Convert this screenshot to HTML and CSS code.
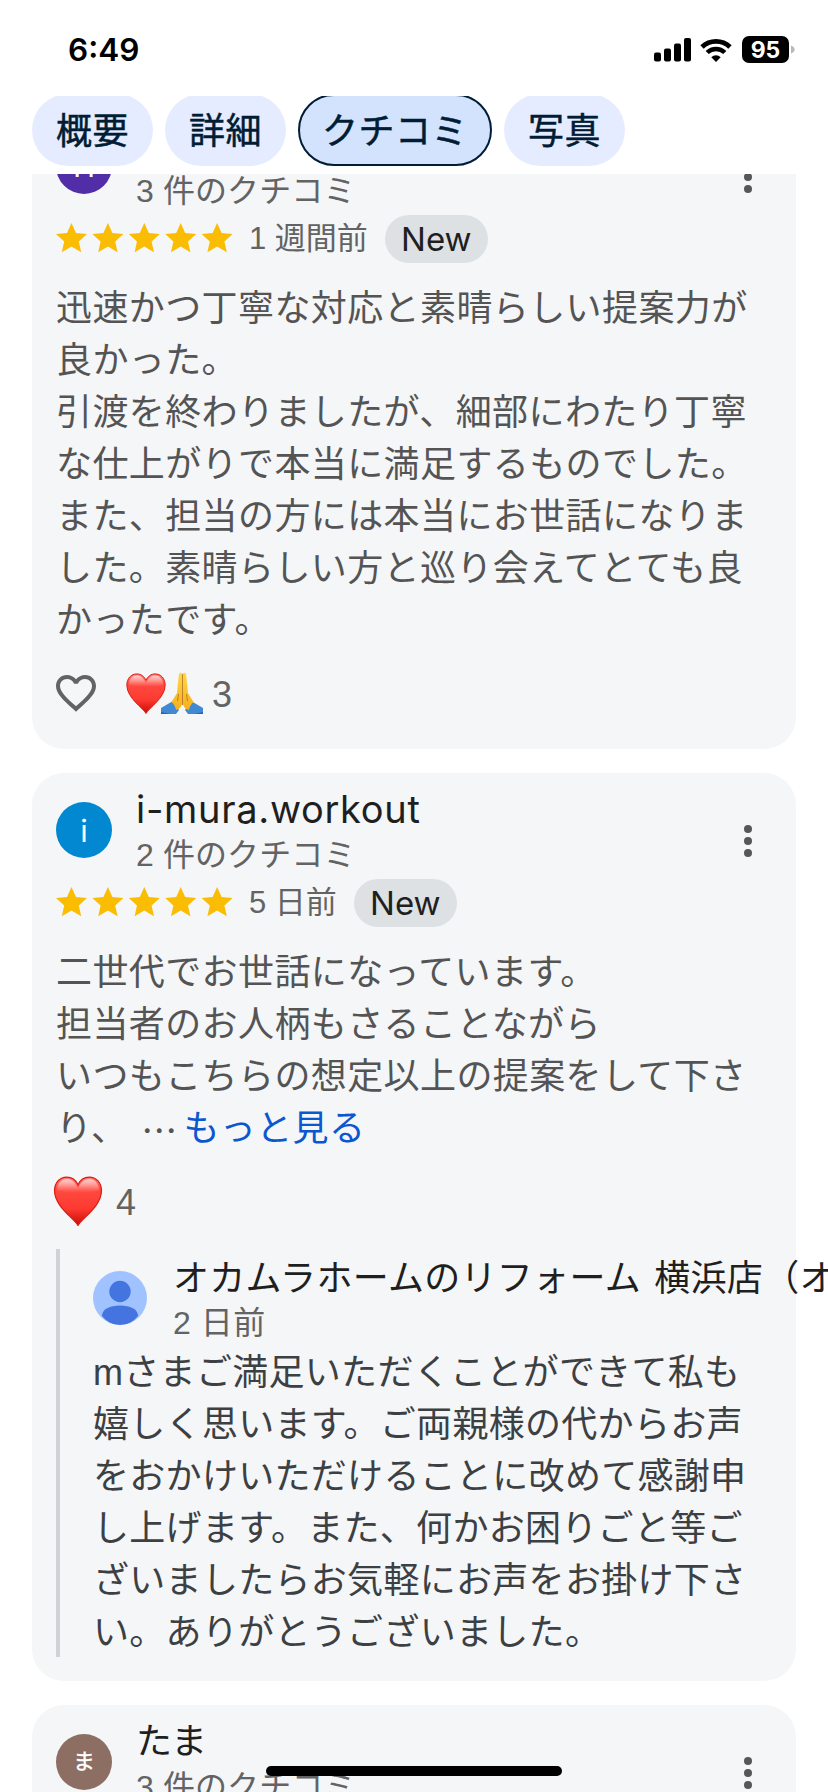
FILE: index.html
```html
<!DOCTYPE html>
<html lang="ja">
<head>
<meta charset="utf-8">
<title>クチコミ</title>
<link rel="stylesheet" href="styles.css">
</head>
<body>
<svg class="defs" aria-hidden="true">
  <defs>
    <linearGradient id="heartFill" x1="0" y1="0" x2="0" y2="1">
      <stop offset="0" stop-color="#ff8078"/><stop offset=".25" stop-color="#ff4a40"/><stop offset=".65" stop-color="#fd3a30"/><stop offset="1" stop-color="#c80d08"/>
    </linearGradient>
    <linearGradient id="heartShine" x1="0" y1="0" x2="0" y2="1">
      <stop offset="0" stop-color="#fff" stop-opacity=".65"/><stop offset="1" stop-color="#fff" stop-opacity="0"/>
    </linearGradient>
    <linearGradient id="hand" x1="0" y1="0" x2="0" y2="1">
      <stop offset="0" stop-color="#ffd748"/><stop offset="1" stop-color="#f5b01d"/>
    </linearGradient>
    <symbol id="heart" viewBox="0 0 48 49">
      <path d="M24 48.500C21 42 1 30 1 14.500C1 6 6.500 1 13 1C18 1 22 4 24 8.500C26 4 30 1 35 1C41.500 1 47 6 47 14.500C47 30 27 42 24 48.500Z" fill="url(#heartFill)" stroke="#dc1c12" stroke-width="1.200"/>
      <path d="M3.500 14C3.500 7 8 3 13 3C18 3 21 6 24 12C27 6 30 3 35 3C40 3 44.500 7 44.500 14C38 17 10 17 3.500 14Z" fill="url(#heartShine)"/>
    </symbol>
    <symbol id="stars" viewBox="0 0 177 30">
      <g fill="#fbbc04">
        <path id="star" d="M15.500 0L20 10.100L31 11.100L22.800 18.500L25.200 29.300L15.500 23.600L5.800 29.300L8.200 18.500L0 11.100L11 10.100Z"/>
        <use href="#star" x="36.400"/><use href="#star" x="72.800"/><use href="#star" x="109.200"/><use href="#star" x="145.600"/>
      </g>
    </symbol>
    <symbol id="dots" viewBox="0 0 8 32"><g fill="#575757"><circle cx="4" cy="4" r="4"/><circle cx="4" cy="16" r="4"/><circle cx="4" cy="28" r="4"/></g></symbol>
  </defs>
</svg>
<div class="screen">
  <header class="status">
    <span class="time">6:49</span>
    <div class="indicators">
      <svg class="signal" viewBox="0 0 38 24"><rect x="0" y="14.500" width="7" height="9" rx="2"/><rect x="10" y="10.500" width="7" height="13" rx="2"/><rect x="20" y="5.500" width="7" height="18" rx="2"/><rect x="30" y="0" width="7" height="23.500" rx="2"/></svg>
      <svg class="wifi" viewBox="0 0 32 24"><path d="M2 9A20 20 0 0 1 30 9" fill="none" stroke="#000" stroke-width="4.700"/><path d="M7.200 14.500A12.500 12.500 0 0 1 24.800 14.500" fill="none" stroke="#000" stroke-width="4.500"/><path d="M16 24L11.300 19.300A6.700 6.700 0 0 1 20.700 19.300Z"/></svg>
      <div class="battery"><span>95</span></div>
      <svg class="cap" viewBox="0 0 5 10"><path d="M0 0C6 2 6 8 0 10Z" fill="#b9b9b9"/></svg>
    </div>
  </header>
  <nav class="tabs">
    <span class="tab">概要</span><span class="tab">詳細</span><span class="tab active">クチコミ</span><span class="tab">写真</span>
  </nav>
  <main class="reviews">
    <article class="card first">
      <div class="author">
        <div class="avatar purple">H</div>
        <div class="who"><div class="name"></div><div class="count">3 件のクチコミ</div></div>
        <svg class="more"><use href="#dots"/></svg>
      </div>
      <div class="rating"><svg class="stars"><use href="#stars"/></svg><span class="date">1 週間前</span><span class="badge">New</span></div>
      <p class="text">迅速かつ丁寧な対応と素晴らしい提案力が<br>良かった。<br>引渡を終わりましたが、細部にわたり丁寧<br>な仕上がりで本当に満足するものでした。<br>また、担当の方には本当にお世話になりま<br>した。素晴らしい方と巡り会えてとても良<br>かったです。</p>
      <div class="reactions">
        <svg class="like" viewBox="0 0 24 24"><path fill="#636363" d="M16.500 3c-1.740 0-3.410.81-4.500 2.090C10.910 3.810 9.240 3 7.500 3 4.420 3 2 5.420 2 8.500c0 3.780 3.400 6.860 8.550 11.540L12 21.350l1.450-1.320C18.600 15.360 22 12.280 22 8.500 22 5.420 19.580 3 16.500 3zm-4.400 15.550l-.1.100-.1-.1C7.140 14.240 4 11.390 4 8.500 4 6.500 5.500 5 7.500 5c1.540 0 3.040.99 3.570 2.360h1.870C13.460 5.990 14.960 5 16.500 5c2 0 3.500 1.500 3.500 3.500 0 2.890-3.140 5.740-7.900 10.050z"/></svg>
        <svg class="heart-small"><use href="#heart"/></svg>
        <svg class="hands" viewBox="0 0 42 42">
          <path d="M0 36L12 29L18 38L15 42H0Z" fill="#4189d2"/><path d="M42 36L30 29L24 38L27 42H42Z" fill="#4189d2"/>
          <path d="M0 40L9 42H0ZM42 40L33 42H42Z" fill="#2b63ad"/>
          <path d="M21 1C19 0 17.800 1 17.700 4L16 21L10.500 30C13 32 15 36 15 38C19 37 21 34 21.300 30Z" fill="url(#hand)"/>
          <path d="M22 1C24 0 25.200 1 25.300 4L27 21L32.500 30C30 32 28 36 28 38C24 37 22 34 21.700 30Z" fill="url(#hand)"/>
          <path d="M21.500 2V33M17.500 22L16.500 29M25.500 22L26.500 29" fill="none" stroke="#bb7516" stroke-width=".9"/>
        </svg>
        <span class="total">3</span>
      </div>
    </article>

    <article class="card second">
      <div class="author">
        <div class="avatar blue">i</div>
        <div class="who"><div class="name latin">i-mura.workout</div><div class="count">2 件のクチコミ</div></div>
        <svg class="more"><use href="#dots"/></svg>
      </div>
      <div class="rating"><svg class="stars"><use href="#stars"/></svg><span class="date">5 日前</span><span class="badge">New</span></div>
      <p class="text">二世代でお世話になっています。<br>担当者のお人柄もさることながら<br>いつもこちらの想定以上の提案をして下さ<br>り、<span class="ellipsis">…</span><a class="link">もっと見る</a></p>
      <div class="reactions large"><svg class="heart-large"><use href="#heart"/></svg><span class="total">4</span></div>
      <section class="reply">
        <div class="owner">
          <svg class="owner-icon" viewBox="0 0 54 54"><defs><clipPath id="disc"><circle cx="27" cy="27" r="27"/></clipPath></defs><circle cx="27" cy="27" r="27" fill="#a0c2ff"/><g fill="#4374e0" clip-path="url(#disc)"><circle cx="27" cy="20.500" r="10.700"/><path d="M9 45C9 38 17 34.500 27 34.500S45 38 45 45C40 51 34 54 27 54S14 51 9 45Z"/></g></svg>
          <div class="who"><div class="owner-name">オカムラホームのリフォーム <span class="branch">横浜店（オ</span></div><div class="owner-date">2 日前</div></div>
        </div>
        <p class="text reply-text">mさまご満足いただくことができて私も<br>嬉しく思います。ご両親様の代からお声<br>をおかけいただけることに改めて感謝申<br>し上げます。また、何かお困りごと等ご<br>ざいましたらお気軽にお声をお掛け下さ<br>い。ありがとうございました。</p>
      </section>
    </article>

    <article class="card third">
      <div class="author">
        <div class="avatar brown">ま</div>
        <div class="who"><div class="name">たま</div><div class="count">3 件のクチコミ</div></div>
        <svg class="more"><use href="#dots"/></svg>
      </div>
    </article>
  </main>
  <div class="home-bar"></div>
</div>
</body>
</html>
```
FILE: styles.css
```css
* { box-sizing: border-box; }
body { margin: 0; background: #fff; font-family: "Liberation Sans", "Noto Sans CJK JP", sans-serif; }
.defs { position: absolute; width: 0; height: 0; }
.screen { position: relative; width: 828px; height: 1792px; overflow: hidden; display: flex; flex-direction: column; }
svg { display: block; flex: none; }

.status { height: 96px; flex: none; display: flex; justify-content: space-between; align-items: flex-start; padding: 36px 33px 0 68px; }
.time { font: 600 31.5px/27px Inter, sans-serif; }
.indicators { display: flex; align-items: center; height: 27px; }
.signal { width: 38px; height: 24px; }
.wifi { width: 32px; height: 24px; margin-left: 8px; }
.battery { width: 47px; height: 27px; margin-left: 10px; border-radius: 7px; background: #000; color: #fff; text-align: center; font: 700 23px/28px Inter, sans-serif; }
.cap { width: 4px; height: 9px; margin-left: 2px; }

.tabs { height: 78px; flex: none; overflow: hidden; display: flex; gap: 12px; padding-left: 32px; }
.tab { height: 72px; margin-top: -2px; padding: 0 24px; border-radius: 36px; background: #e6ecff; color: #001d35; font-size: 36px; line-height: 75px; letter-spacing: .5px; -webkit-text-stroke: .5px #001d35; white-space: nowrap; }
.tab.active { background: #d3e3fd; border: 2px solid #001d35; padding: 0 22px; line-height: 71px; }

.reviews { flex: 1; min-height: 0; overflow: hidden; padding: 0 32px; display: flex; flex-direction: column; gap: 24px; }
.card { flex: none; background: #f4f6f8; border-radius: 32px; padding: 12px 24px 0; }
.first { margin-top: -65px; height: 640px; }
.second { height: 908px; }
.third { height: 300px; }

.author { display: flex; height: 92px; }
.avatar { width: 56px; height: 56px; margin-top: 17px; border-radius: 50%; color: #fff; text-align: center; line-height: 57px; font-size: 30px; flex: none; }
.purple { background: #512da8; }
.blue { background: #0288d1; font-family: Inter, sans-serif; font-size: 31px; }
.brown { background: #8d6e63; font-size: 22px; line-height: 56px; -webkit-text-stroke: .4px #fff; }
.who { margin-left: 24px; flex: 1; min-width: 0; white-space: nowrap; }
.name { height: 48px; font-size: 36px; line-height: 50px; color: #1f1f1f; }
.latin { font-family: Inter, sans-serif; font-size: 38px; line-height: 49px; letter-spacing: .7px; }
.count, .owner-date { font-size: 32px; line-height: 45px; color: #636363; }
.count { letter-spacing: .1px; }
.owner-date { letter-spacing: .5px; }
.more { width: 8px; height: 32px; margin: 40px 20px 0 0; }

.rating { display: flex; align-items: center; height: 52px; }
.stars { width: 177px; height: 30px; margin-top: -2px; }
.date { margin-left: 16px; font-size: 31px; line-height: 44px; color: #636363; white-space: nowrap; }
.badge { margin-left: 17px; width: 103px; height: 48px; border-radius: 24px; background: #dde1e4; color: #1f1f1f; text-align: center; font: 400 33px/49px Inter, sans-serif; }

.text { margin: 18px 0 0; font-size: 36px; line-height: 52px; letter-spacing: .4px; color: #545454; white-space: nowrap; }
.ellipsis { display: inline-block; width: 56px; height: 52px; vertical-align: top; text-align: center; padding-left: 8px; font-family: "Noto Sans CJK JP", sans-serif; }
.link { color: #0b57d0; }

.reactions { display: flex; align-items: center; height: 44px; margin-top: 24px; }
.like { width: 48px; height: 48px; margin-left: -4px; }
.heart-small { width: 40px; height: 41px; margin-left: 26px; }
.hands { width: 42px; height: 42px; margin-left: -5px; }
.total { margin-left: 9px; padding-top: 3px; font-size: 36px; line-height: 44px; color: #636363; }
.large { height: 50px; margin-top: 21px; }
.heart-large { width: 50px; height: 50px; margin-left: -3px; }
.large .total { margin-left: 13px; }

.reply { margin-top: 23px; height: 408px; border-left: 4px solid #d0d2d5; padding-left: 33px; }
.owner { display: flex; height: 98px; }
.owner-icon { width: 54px; height: 54px; margin-top: 22px; }
.owner-name { margin-left: 2px; height: 52px; font-size: 36px; line-height: 59px; color: #1f1f1f; letter-spacing: .3px; }
.branch { margin-left: 3px; }
.owner-date { margin-left: 2px; }
.reply-text { margin: 0; color: #3c4043; letter-spacing: .3px; }

.home-bar { position: absolute; left: 266px; top: 1766px; width: 296px; height: 10px; border-radius: 5px; background: #000; }
```
